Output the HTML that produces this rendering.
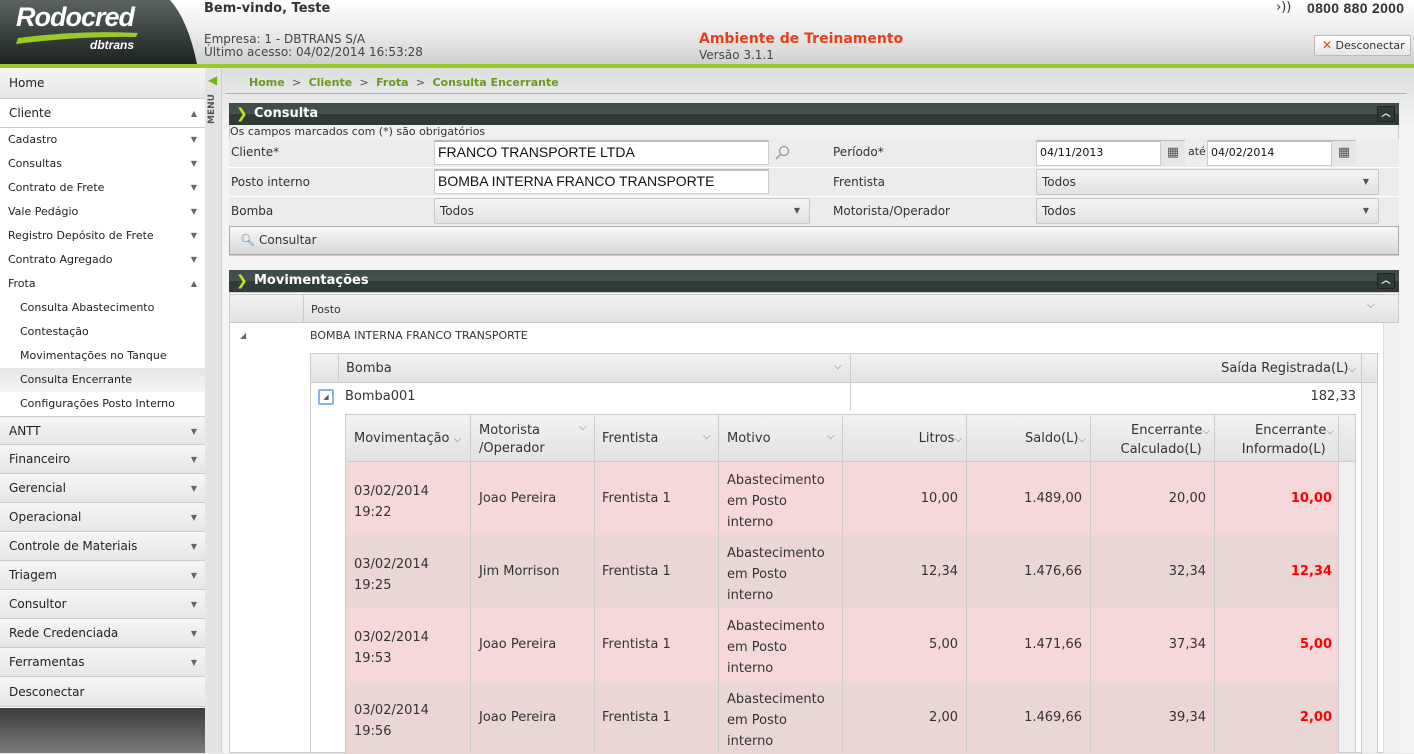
<!DOCTYPE html>
<html><head><meta charset="utf-8"><style>
*{box-sizing:border-box;margin:0;padding:0}
body{width:1414px;height:753px;overflow:hidden;font-family:"DejaVu Sans","Liberation Sans",sans-serif;font-size:12px;color:#333;background:#e8e8e8;position:relative}
.a{position:absolute;white-space:nowrap}
.hdr{left:0;top:0;width:1414px;height:64px;background:linear-gradient(#fff,#f0f0f0 40%,#cfd1d0)}
.gl{left:0;top:64px;width:1414px;height:4px;background:#9ac92a}
.side{left:0;top:68px;width:205px;height:685px;background:#fff}
.mi{position:absolute;left:0;width:205px;border-bottom:1px solid #ccc;background:linear-gradient(#f6f6f6,#e6e6e6);padding-left:9px;font-size:12px;color:#222}
.si{position:absolute;left:0;width:205px;padding-left:8px;font-size:11px;color:#222;height:24px;line-height:24px}
.ar{position:absolute;right:8px;font-size:8px;color:#666}
.bg{left:229px;width:1170px;background:#f0f0f0}
.ph{position:absolute;left:229px;width:1170px;height:22px;background:linear-gradient(#3d4c4a,#47514e 50%,#2f3b38 50%);color:#fff;font-weight:bold;font-size:13px;line-height:22px;padding-left:25px}
.ph .ch{position:absolute;left:7px;top:0;color:#c3e41b;font-size:14px}
.ph .up{position:absolute;right:4px;top:3px;width:18px;height:16px;border:1px solid #222;border-radius:2px;background:#2e3a37;color:#fff;font-size:9px;line-height:14px;text-align:center}
.lab{position:absolute;font-size:12px;color:#333;white-space:nowrap}
.inp{position:absolute;background:#fff;border:1px solid #ccc;border-top:2px solid #bbb;font-family:"Liberation Sans",sans-serif;font-size:14px;color:#111;padding-left:3px;line-height:20px}
.sel{position:absolute;background:linear-gradient(#f4f4f4,#e2e2e2);border:1px solid #c8c8c8;border-radius:2px;padding-left:5px;line-height:24px;font-size:12px}
.sel:after{content:"▼";position:absolute;right:9px;font-size:8px;color:#555}
.th{position:absolute;background:linear-gradient(#f2f2f2,#e2e2e2);border:1px solid #ccc;font-size:13px;color:#333}
.c{position:absolute;font-size:13px;color:#333;white-space:nowrap}
.r{text-align:right}
</style></head><body>
<div class="a hdr"></div>
<svg class="a" style="left:0;top:0" width="200" height="64"><defs><linearGradient id="g" x1="0" y1="0" x2="0" y2="1"><stop offset="0" stop-color="#5c6460"/><stop offset="1" stop-color="#1c231f"/></linearGradient></defs><path d="M0 0H170Q188 20 197 64H0Z" fill="url(#g)"/><path d="M18 38 Q80 30 138 33 L136 37 Q80 36 16 44Z" fill="#9ac92a"/></svg>
<div class="a" style="left:16px;top:2px;color:#fff;font:italic bold 27px 'Liberation Sans',sans-serif;letter-spacing:-1px">Rodocred</div>
<div class="a" style="left:90px;top:38px;color:#fff;font:italic bold 12px 'Liberation Sans',sans-serif">dbtrans</div>
<div class="a" style="left:204px;top:1px;font-weight:bold;font-size:13px;color:#333">Bem-vindo, Teste</div>
<div class="a" style="left:204px;top:33px;font-size:12px;color:#444;line-height:13px">Empresa: 1 - DBTRANS S/A<br>Último acesso: 04/02/2014 16:53:28</div>
<div class="a" style="left:699px;top:31px;font-weight:bold;font-size:14px;color:#e8401c">Ambiente de Treinamento</div>
<div class="a" style="left:699px;top:48px;font-size:12px;color:#444">Versão 3.1.1</div>
<div class="a" style="left:1276px;top:0px;font-size:13px;color:#333">›))</div>
<div class="a" style="left:1307px;top:0px;font-weight:bold;font-size:13px;color:#333;letter-spacing:0.3px;font-family:'Liberation Sans',sans-serif;font-size:14px">0800 880 2000</div>
<div class="a" style="left:1314px;top:35px;width:97px;height:21px;background:linear-gradient(#fff,#e6e6e6);border:1px solid #bbb;border-radius:2px;font-size:11px;line-height:19px;padding-left:7px"><span style="color:#e8401c;font-size:12px">✕</span> Desconectar</div>
<div class="a gl"></div>

<div class="a side">
<div class="mi" style="top:0;height:31px;line-height:31px">Home</div>
<div class="mi" style="top:31px;height:29px;line-height:29px;background:#fff">Cliente<span class="ar">▲</span></div>
<div class="si" style="top:60px">Cadastro<span class="ar">▼</span></div>
<div class="si" style="top:84px">Consultas<span class="ar">▼</span></div>
<div class="si" style="top:108px">Contrato de Frete<span class="ar">▼</span></div>
<div class="si" style="top:132px">Vale Pedágio<span class="ar">▼</span></div>
<div class="si" style="top:156px">Registro Depósito de Frete<span class="ar">▼</span></div>
<div class="si" style="top:180px">Contrato Agregado<span class="ar">▼</span></div>
<div class="si" style="top:204px">Frota<span class="ar">▲</span></div>
<div class="si" style="top:228px;padding-left:20px">Consulta Abastecimento</div>
<div class="si" style="top:252px;padding-left:20px">Contestação</div>
<div class="si" style="top:276px;padding-left:20px">Movimentações no Tanque</div>
<div class="si" style="top:300px;padding-left:20px;background:linear-gradient(#e6e6e6,#f4f4f4)">Consulta Encerrante</div>
<div class="si" style="top:324px;padding-left:20px">Configurações Posto Interno</div>
<div class="mi" style="top:348px;height:29px;line-height:29px;border-top:1px solid #ccc">ANTT<span class="ar">▼</span></div>
<div class="mi" style="top:377px;height:29px;line-height:29px">Financeiro<span class="ar">▼</span></div>
<div class="mi" style="top:406px;height:29px;line-height:29px">Gerencial<span class="ar">▼</span></div>
<div class="mi" style="top:435px;height:29px;line-height:29px">Operacional<span class="ar">▼</span></div>
<div class="mi" style="top:464px;height:29px;line-height:29px">Controle de Materiais<span class="ar">▼</span></div>
<div class="mi" style="top:493px;height:29px;line-height:29px">Triagem<span class="ar">▼</span></div>
<div class="mi" style="top:522px;height:29px;line-height:29px">Consultor<span class="ar">▼</span></div>
<div class="mi" style="top:551px;height:29px;line-height:29px">Rede Credenciada<span class="ar">▼</span></div>
<div class="mi" style="top:580px;height:29px;line-height:29px">Ferramentas<span class="ar">▼</span></div>
<div class="mi" style="top:609px;height:30px;line-height:30px">Desconectar</div>
<div style="position:absolute;top:640px;left:0;width:205px;height:45px;background:linear-gradient(#3c3c3c,#7a7a7a)"></div>
</div>
<div class="a" style="left:205px;top:68px;width:17px;height:685px;background:#e4e4e4;border-right:1px solid #d0d0d0"></div>
<div class="a" style="left:208px;top:73px;color:#7ab317;font-size:12px;font-weight:bold">◀</div>
<div class="a" style="left:207px;top:124px;transform:rotate(-90deg);transform-origin:left top;font-size:9px;font-weight:bold;color:#555">MENU</div>

<div class="a" style="left:222px;top:68px;width:1192px;height:685px;background:linear-gradient(#dcdedd,#f4f4f4 60px)"></div>
<div class="a" style="left:249px;top:76px;font-weight:bold;font-size:11px;color:#6a9a1a">Home <span style="color:#555;font-weight:normal">&nbsp;&gt;&nbsp;</span> Cliente <span style="color:#555;font-weight:normal">&nbsp;&gt;&nbsp;</span> Frota <span style="color:#555;font-weight:normal">&nbsp;&gt;&nbsp;</span> Consulta Encerrante</div>
<div class="a" style="left:225px;top:93px;width:1182px;height:1px;background:#a6d41e"></div>

<div class="ph" style="top:103px"><span class="ch">❯</span>Consulta<span class="up">︿</span></div>
<div class="a bg" style="top:125px;height:131px;border:1px solid #ccc;border-top:0"></div>
<div class="lab" style="left:230px;top:125px;font-size:11px">Os campos marcados com (*) são obrigatórios</div>
<div class="a" style="left:229px;top:139px;width:1170px;height:86px;background:#ececec"></div>
<div class="a" style="left:229px;top:167px;width:1170px;height:1px;background:#fff"></div>
<div class="a" style="left:229px;top:196px;width:1170px;height:1px;background:#fff"></div>
<div class="lab" style="left:231px;top:145px">Cliente*</div>
<div class="lab" style="left:231px;top:175px">Posto interno</div>
<div class="lab" style="left:231px;top:204px">Bomba</div>
<div class="inp" style="left:434px;top:140px;width:335px;height:25px">FRANCO TRANSPORTE LTDA</div>
<svg class="a" style="left:774px;top:145px" width="16" height="16"><circle cx="10" cy="6" r="4.5" fill="none" stroke="#999" stroke-width="1.3"/><path d="M7 9 2 14" stroke="#999" stroke-width="1.5"/></svg>
<div class="inp" style="left:434px;top:169px;width:335px;height:25px">BOMBA INTERNA FRANCO TRANSPORTE</div>
<div class="sel" style="left:434px;top:198px;width:376px;height:26px">Todos</div>
<div class="lab" style="left:833px;top:145px">Período*</div>
<div class="lab" style="left:833px;top:175px">Frentista</div>
<div class="lab" style="left:833px;top:204px">Motorista/Operador</div>
<div class="inp" style="left:1036px;top:140px;width:149px;height:26px;font-family:'DejaVu Sans';font-size:11px;line-height:22px">04/11/2013</div>
<div class="a" style="left:1160px;top:141px;width:25px;height:25px;background:#e6e6e6;border-left:1px solid #ccc;text-align:center;line-height:24px;font-size:13px;color:#555">▦</div>
<div class="lab" style="left:1188px;top:145px;font-size:11px">até</div>
<div class="inp" style="left:1207px;top:140px;width:149px;height:26px;font-family:'DejaVu Sans';font-size:11px;line-height:22px">04/02/2014</div>
<div class="a" style="left:1331px;top:141px;width:25px;height:25px;background:#e6e6e6;border-left:1px solid #ccc;text-align:center;line-height:24px;font-size:13px;color:#555">▦</div>
<div class="sel" style="left:1036px;top:169px;width:343px;height:26px">Todos</div>
<div class="sel" style="left:1036px;top:198px;width:343px;height:26px">Todos</div>
<div class="a" style="left:229px;top:226px;width:1170px;height:29px;background:linear-gradient(#f8f8f8,#d8d8d8);border:1px solid #aaa;font-size:12px;line-height:27px;padding-left:10px"><span style="color:#4a86c5">🔍︎</span> Consultar</div>

<div class="ph" style="top:270px"><span class="ch">❯</span>Movimentações<span class="up">︿</span></div>
<div class="a" style="left:229px;top:292px;width:1170px;height:461px;background:#fff;border:1px solid #ccc"></div>
<div class="th" style="left:229px;top:294px;width:1170px;height:29px"></div>
<div class="a" style="left:303px;top:295px;width:1px;height:28px;background:#ccc"></div>
<div class="c" style="left:311px;top:303px;font-size:11px">Posto</div>
<div class="c" style="left:1367px;top:300px;font-size:10px;color:#777">⌵</div>
<div class="a" style="left:1383px;top:323px;width:16px;height:430px;background:#f0f0f0;border-left:1px solid #ddd"></div>
<div class="c" style="left:240px;top:331px;font-size:8px;color:#666">◢</div>
<div class="c" style="left:310px;top:329px;font-size:11px">BOMBA INTERNA FRANCO TRANSPORTE</div>

<div class="a" style="left:310px;top:353px;width:1068px;height:400px;border:1px solid #ccc;background:#fff"></div>
<div class="th" style="left:310px;top:353px;width:1068px;height:30px"></div>
<div class="a" style="left:338px;top:354px;width:1px;height:29px;background:#ccc"></div>
<div class="a" style="left:850px;top:354px;width:1px;height:56px;background:#ccc"></div>
<div class="a" style="left:1361px;top:354px;width:1px;height:400px;background:#ccc"></div>
<div class="c" style="left:346px;top:361px">Bomba</div>
<div class="c" style="left:834px;top:361px;font-size:10px;color:#777">⌵</div>
<div class="c r" style="left:1150px;top:361px;width:206px">Saída Registrada(L)<span style="font-size:10px;color:#777">⌵</span></div>
<div class="a" style="left:1362px;top:383px;width:15px;height:370px;background:#f0f0f0"></div>
<div class="a" style="left:318px;top:389px;width:16px;height:16px;border:2px solid #8ab2ec;border-radius:2px;font-size:7px;color:#555;text-align:center;line-height:12px">◢</div>
<div class="c" style="left:345px;top:389px">Bomba001</div>
<div class="c r" style="left:1200px;top:389px;width:156px">182,33</div>

<div class="a" style="left:345px;top:414px;width:1011px;height:339px;border:1px solid #ccc;background:#f0f0f0"></div>
<div class="th" style="left:345px;top:414px;width:1011px;height:48px"></div>
<div class="a" style="left:346px;top:462px;width:992px;height:73px;background:#f5d9da"></div>
<div class="a" style="left:346px;top:535px;width:992px;height:73px;background:#ebd6d6"></div>
<div class="a" style="left:346px;top:608px;width:992px;height:73px;background:#f5d9da"></div>
<div class="a" style="left:346px;top:681px;width:992px;height:73px;background:#ebd6d6"></div>
<div class="a" style="left:470px;top:415px;width:1px;height:338px;background:#ccc"></div>
<div class="a" style="left:594px;top:415px;width:1px;height:338px;background:#ccc"></div>
<div class="a" style="left:718px;top:415px;width:1px;height:338px;background:#ccc"></div>
<div class="a" style="left:842px;top:415px;width:1px;height:338px;background:#ccc"></div>
<div class="a" style="left:966px;top:415px;width:1px;height:338px;background:#ccc"></div>
<div class="a" style="left:1090px;top:415px;width:1px;height:338px;background:#ccc"></div>
<div class="a" style="left:1214px;top:415px;width:1px;height:338px;background:#ccc"></div>
<div class="a" style="left:1338px;top:415px;width:1px;height:338px;background:#ccc"></div>

<div class="c" style="left:354px;top:431px">Movimentação <span style="font-size:10px;color:#777">⌵</span></div>
<div class="c" style="left:479px;top:422px;line-height:18px">Motorista<br>/Operador</div><div class="c" style="left:579px;top:422px;font-size:10px;color:#777">⌵</div>
<div class="c" style="left:602px;top:431px">Frentista</div><div class="c" style="left:703px;top:431px;font-size:10px;color:#777">⌵</div>
<div class="c" style="left:727px;top:431px">Motivo</div><div class="c" style="left:827px;top:431px;font-size:10px;color:#777">⌵</div>
<div class="c r" style="left:850px;top:431px;width:112px">Litros<span style="font-size:10px;color:#777">⌵</span></div>
<div class="c r" style="left:974px;top:431px;width:112px">Saldo(L)<span style="font-size:10px;color:#777">⌵</span></div>
<div class="c r" style="left:1094px;top:422px;width:116px;line-height:18px">Encerrante<span style="font-size:10px;color:#777">⌵</span><br>Calculado(L)&nbsp;&nbsp;</div>
<div class="c r" style="left:1218px;top:422px;width:116px;line-height:18px">Encerrante<span style="font-size:10px;color:#777">⌵</span><br>Informado(L)&nbsp;&nbsp;</div>

<div class="c" style="left:354px;top:481px;line-height:21px">03/02/2014<br>19:22</div>
<div class="c" style="left:479px;top:491px">Joao Pereira</div><div class="c" style="left:602px;top:491px">Frentista 1</div>
<div class="c" style="left:727px;top:470px;line-height:21px">Abastecimento<br>em Posto<br>interno</div>
<div class="c r" style="left:850px;top:491px;width:108px">10,00</div><div class="c r" style="left:974px;top:491px;width:108px">1.489,00</div><div class="c r" style="left:1098px;top:491px;width:108px">20,00</div><div class="c r" style="left:1222px;top:491px;width:110px;color:#f00;font-weight:bold">10,00</div>

<div class="c" style="left:354px;top:554px;line-height:21px">03/02/2014<br>19:25</div>
<div class="c" style="left:479px;top:564px">Jim Morrison</div><div class="c" style="left:602px;top:564px">Frentista 1</div>
<div class="c" style="left:727px;top:543px;line-height:21px">Abastecimento<br>em Posto<br>interno</div>
<div class="c r" style="left:850px;top:564px;width:108px">12,34</div><div class="c r" style="left:974px;top:564px;width:108px">1.476,66</div><div class="c r" style="left:1098px;top:564px;width:108px">32,34</div><div class="c r" style="left:1222px;top:564px;width:110px;color:#f00;font-weight:bold">12,34</div>

<div class="c" style="left:354px;top:627px;line-height:21px">03/02/2014<br>19:53</div>
<div class="c" style="left:479px;top:637px">Joao Pereira</div><div class="c" style="left:602px;top:637px">Frentista 1</div>
<div class="c" style="left:727px;top:616px;line-height:21px">Abastecimento<br>em Posto<br>interno</div>
<div class="c r" style="left:850px;top:637px;width:108px">5,00</div><div class="c r" style="left:974px;top:637px;width:108px">1.471,66</div><div class="c r" style="left:1098px;top:637px;width:108px">37,34</div><div class="c r" style="left:1222px;top:637px;width:110px;color:#f00;font-weight:bold">5,00</div>

<div class="c" style="left:354px;top:700px;line-height:21px">03/02/2014<br>19:56</div>
<div class="c" style="left:479px;top:710px">Joao Pereira</div><div class="c" style="left:602px;top:710px">Frentista 1</div>
<div class="c" style="left:727px;top:689px;line-height:21px">Abastecimento<br>em Posto<br>interno</div>
<div class="c r" style="left:850px;top:710px;width:108px">2,00</div><div class="c r" style="left:974px;top:710px;width:108px">1.469,66</div><div class="c r" style="left:1098px;top:710px;width:108px">39,34</div><div class="c r" style="left:1222px;top:710px;width:110px;color:#f00;font-weight:bold">2,00</div>
</body></html>
